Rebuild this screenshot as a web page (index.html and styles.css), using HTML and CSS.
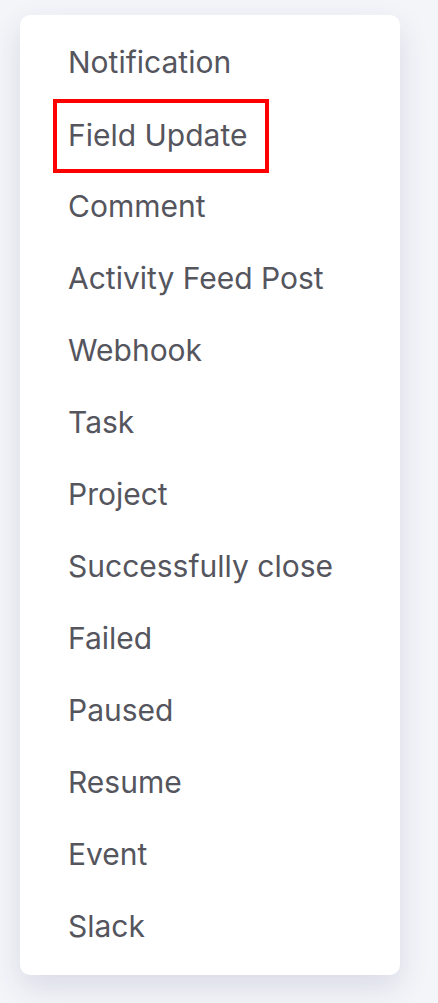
FILE: index.html
```html
<!DOCTYPE html>
<html>
<head>
<meta charset="utf-8">
<link rel="stylesheet" href="styles.css">
</head>
<body>
<div class="menu">
  <div class="item"><span class="label">Notification</span></div>
  <div class="item"><span class="label selected">Field Update</span></div>
  <div class="item"><span class="label">Comment</span></div>
  <div class="item"><span class="label">Activity Feed Post</span></div>
  <div class="item"><span class="label">Webhook</span></div>
  <div class="item"><span class="label">Task</span></div>
  <div class="item"><span class="label">Project</span></div>
  <div class="item"><span class="label">Successfully close</span></div>
  <div class="item"><span class="label">Failed</span></div>
  <div class="item"><span class="label">Paused</span></div>
  <div class="item"><span class="label">Resume</span></div>
  <div class="item"><span class="label">Event</span></div>
  <div class="item"><span class="label">Slack</span></div>
</div>
</body>
</html>
```
FILE: styles.css
```css
html, body {
  margin: 0;
  padding: 0;
  background: #f4f5f9;
}
body {
  box-sizing: border-box;
  min-height: 100vh;
  padding: 15px 38px 28px 20px;
  font-family: Inter, "Noto Sans", sans-serif;
}
.menu {
  width: 380px;
  background: #ffffff;
  border-radius: 10px;
  padding: 12px 0;
  box-shadow: 0 12px 30px rgba(40, 50, 100, 0.13);
}
.item {
  height: 72px;
  padding-left: 33px;
}
.label {
  display: inline-block;
  box-sizing: border-box;
  height: 72px;
  line-height: 70px;
  padding: 0 16px 0 16px;
  font-size: 30px;
  color: #55555e;
}
.item .label {
  padding-left: 15px;
}
.item .selected {
  height: 74px;
  line-height: 64px;
  border: 4px solid #ff0000;
  padding: 0 16px 0 11px;
  width: 216px;
}
```
